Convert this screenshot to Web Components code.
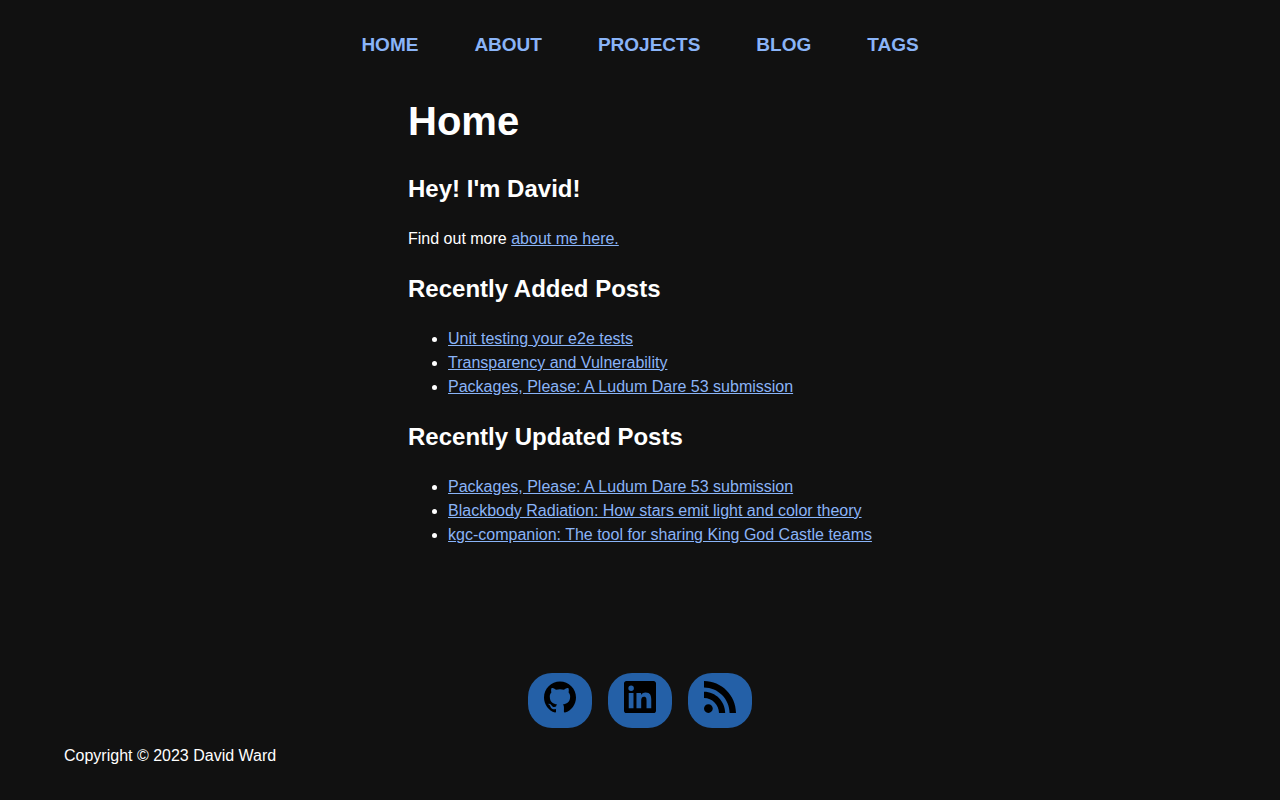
<!DOCTYPE html>
<html lang="en">
<head>
<meta charset="utf-8">
<meta name="viewport" content="width=device-width, initial-scale=1">
<title>Home | David Ward</title>
<style>
html { background: #111; color: #fff; }
body { margin: 0; font: 16px/24px "Liberation Sans", Arial, sans-serif; }
</style>
</head>
<body>
<site-page>
  <site-nav slot="header"></site-nav>
  <page-heading>Home</page-heading>
  <post-section heading="Hey! I'm David!"><intro-text></intro-text></post-section>
  <post-section heading="Recently Added Posts">
    <post-list items='["Unit testing your e2e tests","Transparency and Vulnerability","Packages, Please: A Ludum Dare 53 submission"]'></post-list>
  </post-section>
  <post-section heading="Recently Updated Posts">
    <post-list items='["Packages, Please: A Ludum Dare 53 submission","Blackbody Radiation: How stars emit light and color theory","kgc-companion: The tool for sharing King God Castle teams"]'></post-list>
  </post-section>
  <site-footer slot="footer">Copyright © 2023 David Ward</site-footer>
</site-page>
<script>
function component(name, html, setup) {
  customElements.define(name, class extends HTMLElement {
    constructor() {
      super();
      this.attachShadow({ mode: 'open' }).innerHTML = html;
    }
    connectedCallback() {
      if (setup) setup(this, this.shadowRoot);
    }
  });
}

component('site-page', `
<style>
:host { display: flex; flex-direction: column; min-height: 100vh; }
main { width: fit-content; max-width: calc(100% - 32px); margin: 0 auto; flex: 1; }
</style>
<slot name="header"></slot>
<main><slot></slot></main>
<slot name="footer"></slot>`);

component('site-nav', `
<style>
:host { display: block; padding: 32px 16px 0; line-height: 26px; }
nav { display: flex; flex-wrap: wrap; justify-content: center; gap: 0 56px; }
a { color: #8ab4f8; font-size: 19px; font-weight: bold; text-decoration: none; text-transform: uppercase; }
</style>
<nav><a href="#home">Home</a><a href="#about">About</a><a href="#projects">Projects</a><a href="#blog">Blog</a><a href="#tags">Tags</a></nav>`);

component('page-heading', `
<style>
:host { display: block; }
h1 { margin: 33px 0 0; font-size: 40px; line-height: 60px; }
</style>
<h1><slot></slot></h1>`);

component('post-section', `
<style>
:host { display: block; }
h2 { margin: 20px 0; font-size: 24px; line-height: 36px; }
</style>
<h2></h2><slot></slot>`, (host, root) => {
  root.querySelector('h2').textContent = host.getAttribute('heading');
});

component('intro-text', `
<style>
:host { display: block; }
p { margin: 0; }
a { color: #8ab4f8; }
</style>
<p>Find out more <a href="#about">about me here.</a></p>`);

component('post-list', `
<style>
:host { display: block; }
ul { margin: 0; padding-left: 40px; }
a { color: #8ab4f8; }
</style>
<ul></ul>`, (host, root) => {
  const list = root.querySelector('ul');
  list.replaceChildren(...JSON.parse(host.getAttribute('items')).map(title => {
    const item = document.createElement('li');
    const link = document.createElement('a');
    link.href = '#blog';
    link.textContent = title;
    item.append(link);
    return item;
  }));
});

component('social-link', `
<style>
:host { display: block; }
a { display: block; padding: 8px 16px 15px; border-radius: 24px; background: #2460a7; color: #000; }
svg { display: block; width: 32px; height: 32px; fill: currentColor; }
</style>
<a><svg viewBox="0 0 24 24" aria-hidden="true"><path/></svg></a>`, (host, root) => {
  const icons = {
    GitHub: 'M12 .297c-6.63 0-12 5.373-12 12 0 5.303 3.438 9.8 8.205 11.385.6.113.82-.258.82-.577 0-.285-.01-1.04-.015-2.04-3.338.724-4.042-1.61-4.042-1.61C4.422 18.07 3.633 17.7 3.633 17.7c-1.087-.744.084-.729.084-.729 1.205.084 1.838 1.236 1.838 1.236 1.07 1.835 2.809 1.305 3.495.998.108-.776.417-1.305.76-1.605-2.665-.3-5.466-1.332-5.466-5.93 0-1.31.465-2.38 1.235-3.22-.135-.303-.54-1.523.105-3.176 0 0 1.005-.322 3.3 1.23.96-.267 1.98-.399 3-.405 1.02.006 2.04.138 3 .405 2.28-1.552 3.285-1.23 3.285-1.23.645 1.653.24 2.873.12 3.176.765.84 1.23 1.91 1.23 3.22 0 4.61-2.805 5.625-5.475 5.92.42.36.81 1.096.81 2.22 0 1.606-.015 2.896-.015 3.286 0 .315.21.69.825.57C20.565 22.092 24 17.592 24 12.297c0-6.627-5.373-12-12-12',
    LinkedIn: 'M20.447 20.452h-3.554v-5.569c0-1.328-.027-3.037-1.852-3.037-1.853 0-2.136 1.445-2.136 2.939v5.667H9.351V9h3.414v1.561h.046c.477-.9 1.637-1.85 3.37-1.85 3.601 0 4.267 2.37 4.267 5.455v6.286zM5.337 7.433a2.062 2.062 0 0 1-2.063-2.065 2.064 2.064 0 1 1 2.063 2.065zm1.782 13.019H3.555V9h3.564v11.452zM22.225 0H1.771C.792 0 0 .774 0 1.729v20.542C0 23.227.792 24 1.771 24h20.451C23.2 24 24 23.227 24 22.271V1.729C24 .774 23.2 0 22.222 0h.003z',
    RSS: 'M19.199 24C19.199 13.467 10.533 4.8 0 4.8V0c13.165 0 24 10.835 24 24h-4.801zM3.291 17.415c1.814 0 3.293 1.479 3.293 3.295 0 1.813-1.485 3.29-3.301 3.29C1.47 24 0 22.526 0 20.71s1.475-3.294 3.291-3.295zM15.909 24h-4.665c0-6.169-5.075-11.245-11.244-11.245V8.09c8.727 0 15.909 7.184 15.909 15.91z'
  };
  const name = host.getAttribute('name');
  const link = root.querySelector('a');
  link.href = '#' + name.toLowerCase();
  link.setAttribute('aria-label', name);
  root.querySelector('path').setAttribute('d', icons[name]);
});

component('site-footer', `
<style>
:host { display: block; padding: 0 5% 32px; }
nav { display: flex; justify-content: center; gap: 16px; }
p { margin: 16px 0 0; }
</style>
<footer><nav aria-label="Social links"><social-link name="GitHub"></social-link><social-link name="LinkedIn"></social-link><social-link name="RSS"></social-link></nav><p><slot></slot></p></footer>`);
</script>
</body>
</html>
